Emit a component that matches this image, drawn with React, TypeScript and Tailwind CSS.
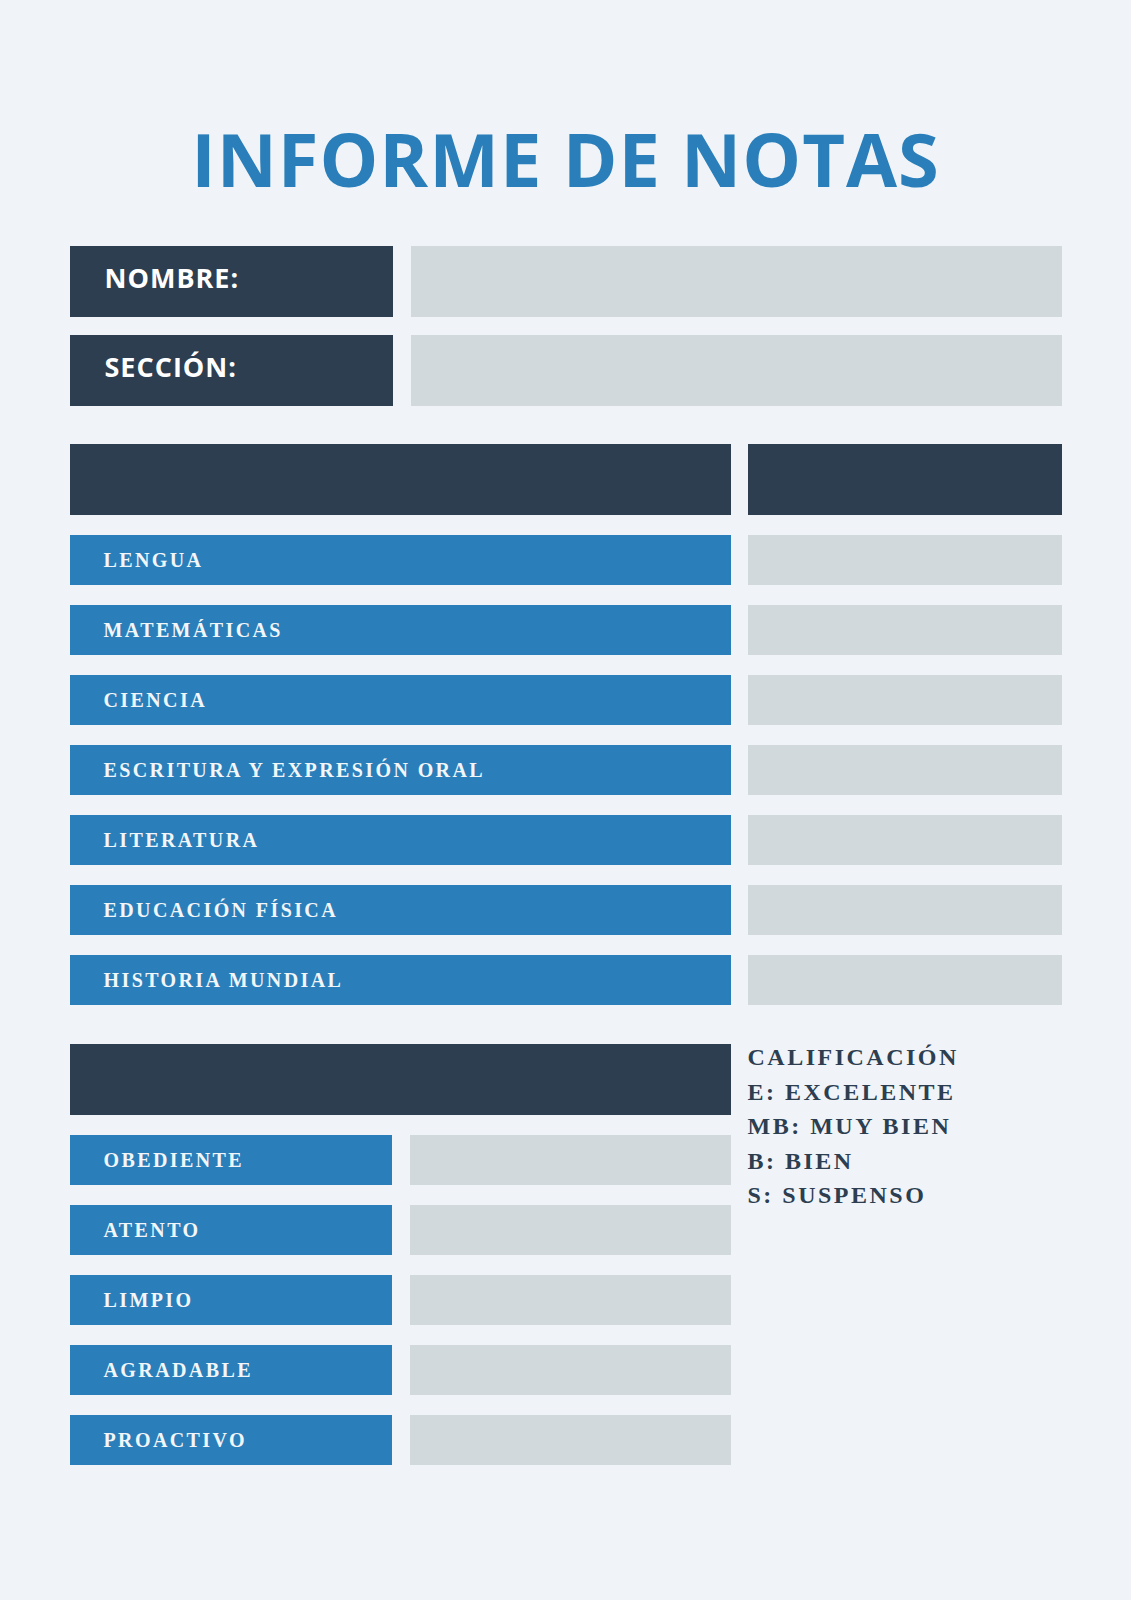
import React from 'react'

const subjects = [
  'LENGUA',
  'MATEMÁTICAS',
  'CIENCIA',
  'ESCRITURA Y EXPRESIÓN ORAL',
  'LITERATURA',
  'EDUCACIÓN FÍSICA',
  'HISTORIA MUNDIAL',
]

const traits = ['OBEDIENTE', 'ATENTO', 'LIMPIO', 'AGRADABLE', 'PROACTIVO']

const legend = ['CALIFICACIÓN', 'E: EXCELENTE', 'MB: MUY BIEN', 'B: BIEN', 'S: SUSPENSO']

const serif = { fontFamily: '"Liberation Serif", "DejaVu Serif", serif' }
const sans = { fontFamily: '"Open Sans", "Liberation Sans", sans-serif' }

function RowLabel({ text }: { text: string }) {
  return (
    <div
      className="h-[50px] bg-[#2a7fba] flex items-center pl-[34px] text-[20px] font-bold tracking-[2.4px] text-[#f3f6f9]"
      style={serif}
    >
      {text}
    </div>
  )
}

export default function App() {
  return (
    <div className="min-h-[1600px] w-full bg-[#f0f4f8]">
      <div className="mx-auto w-[992px] pt-[122px] pb-[134px]">
        <h1
          className="h-[74px] text-center text-[74px] leading-none font-bold tracking-[1px] text-[#2a7fba]"
          style={sans}
        >
          INFORME DE NOTAS
        </h1>

        <div className="mt-[50px] flex flex-col gap-[18px]">
          {['NOMBRE:', 'SECCIÓN:'].map((label) => (
            <div key={label} className="flex gap-[18px]">
              <div
                className="h-[71px] w-[323px] bg-[#2d3e50] flex items-center pl-[35px] pb-[6px] text-[27px] font-bold tracking-[1px] text-white"
                style={sans}
              >
                {label}
              </div>
              <div className="h-[71px] flex-1 bg-[#d1d9dd]" />
            </div>
          ))}
        </div>

        <div className="mt-[38px] grid grid-cols-[661px_1fr] gap-x-[17px] gap-y-[20px]">
          <div className="h-[71px] bg-[#2d3e50]" />
          <div className="h-[71px] bg-[#2d3e50]" />
          {subjects.map((s) => (
            <React.Fragment key={s}>
              <RowLabel text={s} />
              <div className="h-[50px] bg-[#d1d9dd]" />
            </React.Fragment>
          ))}
        </div>

        <div className="mt-[39px] grid grid-cols-[661px_1fr] gap-x-[17px]">
          <div className="flex flex-col gap-[20px]">
            <div className="h-[71px] bg-[#2d3e50]" />
            {traits.map((t) => (
              <div key={t} className="flex gap-[18px]">
                <div className="w-[322px]">
                  <RowLabel text={t} />
                </div>
                <div className="h-[50px] flex-1 bg-[#d1d9dd]" />
              </div>
            ))}
          </div>
          <div
            className="-mt-[4px] text-[24px] leading-[34.5px] font-bold tracking-[2.5px] text-[#2d3e50]"
            style={serif}
          >
            {legend.map((l) => (
              <div key={l}>{l}</div>
            ))}
          </div>
        </div>
      </div>
    </div>
  )
}
